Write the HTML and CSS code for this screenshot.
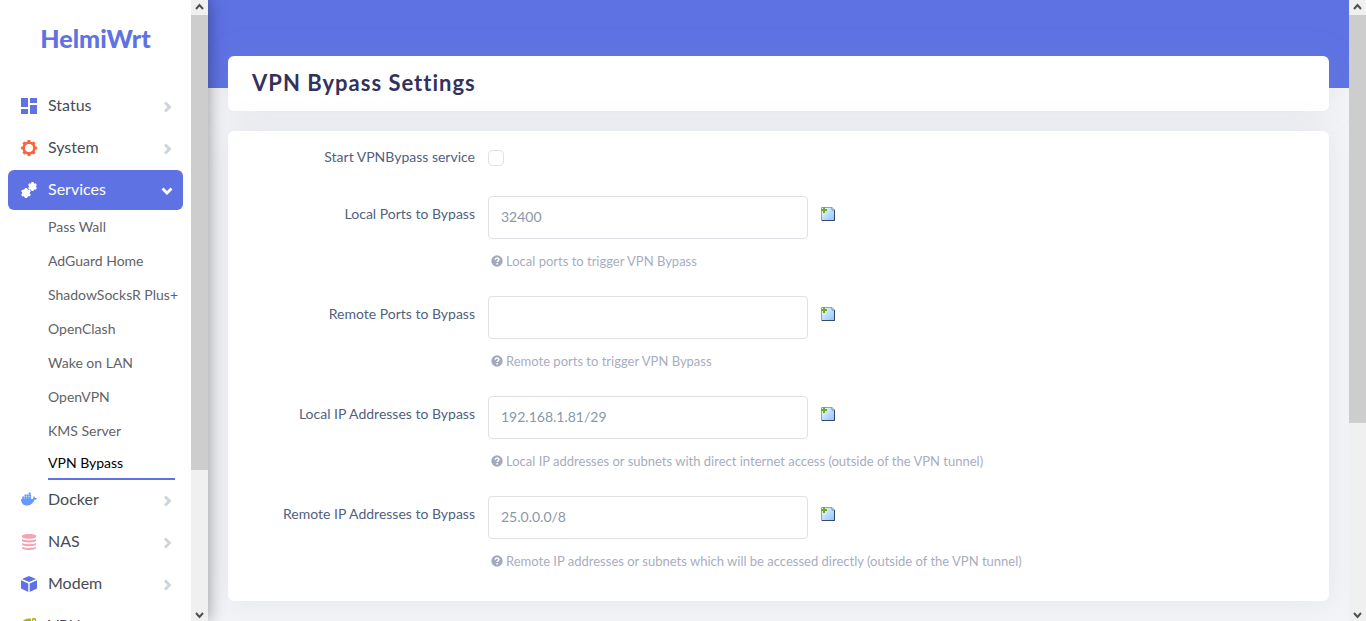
FILE: index.html
```html
<!DOCTYPE html>
<html lang="en">
<head>
<meta charset="utf-8">
<title>HelmiWrt - VPN Bypass</title>
<link rel="stylesheet" href="styles.css">
</head>
<body>
<svg class="defs" aria-hidden="true">
  <symbol id="chevron" viewBox="0 0 10 12"><path d="M3 1.500 7.500 6 3 10.500" fill="none" stroke="currentColor" stroke-width="2.800"/></symbol>
  <symbol id="chevron-down" viewBox="0 0 12 8"><path d="M1.500 1.500 6 6l4.500-4.500" fill="none" stroke="currentColor" stroke-width="2.800"/></symbol>
  <symbol id="help" viewBox="0 0 12 12"><circle cx="6" cy="6" r="5.700" fill="currentColor"/><path d="M4.200 4.700c.1-2.200 3.700-2.200 3.700-.2 0 1.300-1.700 1.300-1.700 2.600" fill="none" stroke="#fff" stroke-width="1.500"/><rect x="5.400" y="8" width="1.600" height="1.600" fill="#fff"/></symbol>
  <symbol id="gear" viewBox="-8 -8 16 16">
    <g fill="currentColor"><rect x="-1.600" y="-8" width="3.200" height="16" rx=".8"/><rect x="-1.600" y="-8" width="3.200" height="16" rx=".8" transform="rotate(45)"/><rect x="-1.600" y="-8" width="3.200" height="16" rx=".8" transform="rotate(90)"/><rect x="-1.600" y="-8" width="3.200" height="16" rx=".8" transform="rotate(135)"/><circle r="6.600"/></g>
    <circle class="gear-hole" r="4"/>
  </symbol>
  <symbol id="small-gear" viewBox="-8 -8 16 16">
    <g fill="currentColor"><rect x="-2" y="-8" width="4" height="16"/><rect x="-2" y="-8" width="4" height="16" transform="rotate(60)"/><rect x="-2" y="-8" width="4" height="16" transform="rotate(120)"/><circle r="6.300"/></g>
    <circle class="gear-hole" r="2.800"/>
  </symbol>
  <symbol id="add" viewBox="0 0 14 14">
    <linearGradient id="paper" x1="0" y1="0" x2="1" y2="1"><stop offset="0" stop-color="#f2f9ff"/><stop offset="1" stop-color="#8dc3fb"/></linearGradient>
    <path d="M.5.500H11L13.500 3v10.500H.5z" fill="url(#paper)" stroke="#8ba3c7"/>
    <path d="M1 13.500h12.500V3" fill="none" stroke="#33486b"/>
    <path d="M11 .5V3h2.500" fill="#fff" stroke="#6681ad"/>
    <path d="M2 0h2v2h2v2H4v2H2V4H0V2h2z" fill="#6dab1d"/>
  </symbol>
</svg>

<div class="shell">
  <aside class="sidebar">
    <div class="menu">
      <a class="brand" href="#">HelmiWrt</a>
      <nav class="nav">
        <a class="nav-item" href="#"><svg class="nav-icon indigo" viewBox="0 0 16 16"><path fill="currentColor" d="M0 0h7v9H0zM9 0h7v5H9zM0 11h7v5H0zM9 7h7v9H9z"/></svg><span class="nav-text">Status</span><svg class="chevron"><use href="#chevron"/></svg></a>
        <a class="nav-item" href="#"><svg class="nav-icon orange"><use href="#gear"/></svg><span class="nav-text">System</span><svg class="chevron"><use href="#chevron"/></svg></a>
        <a class="nav-item open" href="#"><svg class="nav-icon" viewBox="0 0 16 16"><use href="#small-gear" x="0" y="6" width="10" height="10"/><use href="#small-gear" x="7" y="0" width="9" height="9"/></svg><span class="nav-text">Services</span><svg class="chevron-down"><use href="#chevron-down"/></svg></a>
        <div class="submenu">
          <a class="sub-item" href="#">Pass Wall</a>
          <a class="sub-item" href="#">AdGuard Home</a>
          <a class="sub-item" href="#">ShadowSocksR Plus+</a>
          <a class="sub-item" href="#">OpenClash</a>
          <a class="sub-item" href="#">Wake on LAN</a>
          <a class="sub-item" href="#">OpenVPN</a>
          <a class="sub-item" href="#">KMS Server</a>
          <a class="sub-item current" href="#">VPN Bypass</a>
        </div>
        <a class="nav-item" href="#"><svg class="nav-icon blue" viewBox="0 0 16 16"><path fill="currentColor" d="M0 7h11.700c.7-.8.4-2 1-2.800.9.4 1.200 1 1.300 1.800.8-.1 1.500 0 2 .4-.6 1-1.500 1.300-2.500 1.300C12 11.500 9.500 13.500 6 13.500 2 13.500 0 11 0 7zM1.200 4.600h2v2.400h-2zM3.500 4.600h2v2.400h-2zM5.800 4.600h2v2.400h-2zM8.100 4.600h2v2.400h-2zM3.500 2.600h2v1.700h-2zM5.800 2.600h2v1.700h-2zM8 2.600h2v1.700H8zM7.600.5h2v1.800h-2z"/></svg><span class="nav-text">Docker</span><svg class="chevron"><use href="#chevron"/></svg></a>
        <a class="nav-item" href="#"><svg class="nav-icon pink" viewBox="0 0 16 16"><path fill="currentColor" d="M1 2c0-2.600 14-2.600 14 0v1c0 2.400-14 2.400-14 0zM1 5c2.500 1.700 11.500 1.700 14 0v1.800c0 2.300-14 2.300-14 0zM1 9c2.500 1.600 11.500 1.600 14 0v1.600c0 2.300-14 2.300-14 0zM1 12.700c2.500 1.600 11.500 1.600 14 0V14c0 2.600-14 2.600-14 0z"/></svg><span class="nav-text">NAS</span><svg class="chevron"><use href="#chevron"/></svg></a>
        <a class="nav-item" href="#"><svg class="nav-icon indigo" viewBox="0 0 16 16"><path fill="currentColor" d="M8 0l7 2.900L8 6 1 2.900zM0 4.200l7.300 3.200V16L0 12.600zM16 4.200 8.700 7.400V16l7.300-3.400z"/></svg><span class="nav-text">Modem</span><svg class="chevron"><use href="#chevron"/></svg></a>
        <a class="nav-item" href="#"><svg class="nav-icon olive" viewBox="0 0 16 16"><path fill="currentColor" d="M1 4c2-3 5-4 9-3.500V5l-2 2 2 3-3 6C2 14 0 9 1 4z"/><path fill="none" stroke="currentColor" stroke-width="1.500" d="M11.500 4V2c0-1.800 3-1.800 3 0v2"/><path fill="currentColor" d="M10.500 3.500H16V8h-5.500z"/></svg><span class="nav-text">VPN</span><svg class="chevron"><use href="#chevron"/></svg></a>
      </nav>
    </div>
    <div class="scrollbar">
      <svg class="arrow" viewBox="0 0 17 15"><path d="M5 9l3.500-4L12 9"/></svg>
      <div class="track"><div class="thumb menu-thumb"></div></div>
      <svg class="arrow" viewBox="0 0 17 15"><path d="M5 7l3.500 4L12 7"/></svg>
    </div>
  </aside>

  <main class="main">
    <header class="card title-card"><h2 class="title">VPN Bypass Settings</h2></header>
    <form class="card form">
      <div class="row toggle-row"><label class="label" for="start">Start VPNBypass service</label><input class="check" id="start" type="checkbox"></div>
      <div class="row"><label class="label" for="lports">Local Ports to Bypass</label>
        <div class="field"><div class="control"><input class="text" id="lports" type="text" value="32400"><button class="add" type="button" aria-label="Add"><svg class="add-icon"><use href="#add"/></svg></button></div><p class="hint"><svg class="hint-icon"><use href="#help"/></svg>Local ports to trigger VPN Bypass</p></div></div>
      <div class="row"><label class="label" for="rports">Remote Ports to Bypass</label>
        <div class="field"><div class="control"><input class="text" id="rports" type="text"><button class="add" type="button" aria-label="Add"><svg class="add-icon"><use href="#add"/></svg></button></div><p class="hint"><svg class="hint-icon"><use href="#help"/></svg>Remote ports to trigger VPN Bypass</p></div></div>
      <div class="row"><label class="label" for="lips">Local IP Addresses to Bypass</label>
        <div class="field"><div class="control"><input class="text" id="lips" type="text" value="192.168.1.81/29"><button class="add" type="button" aria-label="Add"><svg class="add-icon"><use href="#add"/></svg></button></div><p class="hint"><svg class="hint-icon"><use href="#help"/></svg>Local IP addresses or subnets with direct internet access (outside of the VPN tunnel)</p></div></div>
      <div class="row"><label class="label" for="rips">Remote IP Addresses to Bypass</label>
        <div class="field"><div class="control"><input class="text" id="rips" type="text" value="25.0.0.0/8"><button class="add" type="button" aria-label="Add"><svg class="add-icon"><use href="#add"/></svg></button></div><p class="hint"><svg class="hint-icon"><use href="#help"/></svg>Remote IP addresses or subnets which will be accessed directly (outside of the VPN tunnel)</p></div></div>
    </form>
  </main>

  <div class="scrollbar">
    <svg class="arrow" viewBox="0 0 17 15"><path d="M5 9l3.500-4L12 9"/></svg>
    <div class="track"><div class="thumb page-thumb"></div></div>
    <svg class="arrow" viewBox="0 0 17 15"><path d="M5 7l3.500 4L12 7"/></svg>
  </div>
</div>
</body>
</html>
```
FILE: styles.css
```css
* { box-sizing: border-box; }
body { margin: 0; font-family: Lato, "Liberation Sans", sans-serif; font-size: 14px; color: #525f7f; background: #f3f4f7; }
a { color: inherit; text-decoration: none; }
.defs { position: absolute; width: 0; height: 0; }
.shell { display: flex; height: 100vh; overflow: hidden; }

.sidebar { display: flex; flex: none; z-index: 1; background: #fff; box-shadow: 0 0 16px rgba(0, 0, 0, .4); }
.menu { width: 191px; padding: 0 8px; overflow: hidden; }
.brand { display: block; padding: 18px 0 28px; line-height: 40px; text-align: center; font-size: 25px; font-weight: 900; color: #5e72e4; }
.nav { display: flex; flex-direction: column; }
.nav-item { display: flex; align-items: center; gap: 11px; height: 40px; margin-bottom: 2px; padding: 0 11px 0 13px; border-radius: 6px; font-size: 16px; color: #484c54; flex: none; }
.nav-icon { width: 16px; height: 16px; flex: none; }
.nav-text { line-height: 20px; padding-bottom: 3px; }
.gear-hole { fill: #fff; }
.open .gear-hole { fill: #5e72e4; }
.indigo { color: #5e72e4; }
.orange { color: #fb6340; }
.blue { color: #6699ff; }
.pink { color: #f3a4b5; }
.olive { color: #adb505; }
.chevron { width: 10px; height: 12px; margin: 2px 0 0 auto; color: #ced4da; }
.chevron-down { width: 12px; height: 8px; margin: 2px 0 0 auto; }
.open { margin-bottom: 0; padding-right: 10px; background: #5e72e4; color: #fff; }
.submenu { display: flex; flex-direction: column; padding: 0 8px 0 40px; }
.sub-item { line-height: 34px; white-space: nowrap; color: #5f6368; }
.current { line-height: 30px; color: #000; border-bottom: 2px solid #5e72e4; }

.scrollbar { display: flex; flex-direction: column; flex: none; width: 17px; background: #f0f0f0; }
.arrow { height: 15px; flex: none; fill: none; stroke: #505050; stroke-width: 2; }
.track { flex: 1; }
.thumb { background: #cdcdcd; }
.menu-thumb { height: 77%; }
.page-thumb { height: 69%; }

.main { flex: 1; min-width: 0; padding: 56px 20px 20px; background: linear-gradient(#5e72e4 88px, transparent 88px); }
.card { background: #fff; border-radius: 6px; box-shadow: 0 0 32px rgba(136, 152, 170, .15); }
.title-card { margin-bottom: 20px; padding: 12px 24px 13px; }
.title { margin: 0; line-height: 30px; font-size: 22px; font-weight: 700; letter-spacing: 1px; color: #32325d; }
.form { padding: 15px 0 30px; }
.row { display: grid; grid-template-columns: 247px 1fr; column-gap: 13px; align-items: start; min-height: 100px; }
.row:last-child { min-height: 0; }
.toggle-row { min-height: 50px; }
.label { padding-top: 8px; line-height: 20px; text-align: right; }
.toggle-row .label { padding-top: 1px; }
.check { appearance: none; width: 16px; height: 16px; margin: 4px 0 0; border: 1px solid #dee2e6; border-radius: 4px; background: #fff; }
.control { display: flex; align-items: flex-start; gap: 13px; }
.text { width: 320px; height: 43px; padding: 0 12px 2px; border: 1px solid #dee2e6; border-radius: 4px; font: inherit; color: #8898aa; background: #fff; }
.add { display: flex; padding: 0; margin-top: 11px; border: 0; background: none; }
.add-icon { width: 14px; height: 14px; }
.hint { display: flex; align-items: center; gap: 3px; margin: 12px 0 0; padding-left: 3px; line-height: 20px; font-size: 13px; color: #a7adbf; }
.hint-icon { width: 12px; height: 12px; margin-bottom: 1px; color: #a4aabd; }
```
